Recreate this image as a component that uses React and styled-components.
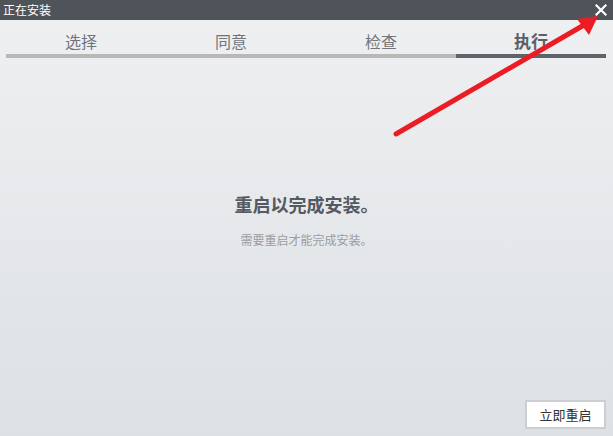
import styled, { createGlobalStyle } from 'styled-components';

const GlobalStyle = createGlobalStyle`
  html, body {
    margin: 0;
    padding: 0;
  }
  body {
    font-family: "Microsoft YaHei", "Noto Sans CJK SC", sans-serif;
  }
`;

const steps = ['选择', '同意', '检查', '执行'];
const activeStep = 3;

const App = () => {
  return (
    <Window>
      <GlobalStyle />
      <TitleBar>
        <Title>正在安装</Title>
        <CloseButton aria-label="close">
          <svg width="12" height="12" viewBox="0 0 12 12">
            <path d="M1.5 1.5 L10.5 10.5 M10.5 1.5 L1.5 10.5" stroke="#fff" strokeWidth="2.2" strokeLinecap="square" />
          </svg>
        </CloseButton>
      </TitleBar>
      <Steps>
        {steps.map((s, i) => (
          <Step key={s} active={i === activeStep}>
            <StepLabel active={i === activeStep}>{s}</StepLabel>
            <StepBar active={i === activeStep} />
          </Step>
        ))}
      </Steps>
      <Body>
        <Heading>重启以完成安装。</Heading>
        <Note>需要重启才能完成安装。</Note>
      </Body>
      <Footer>
        <Button>立即重启</Button>
      </Footer>
      <Pointer width="613" height="436" viewBox="0 0 613 436">
        <line x1="396" y1="134" x2="584" y2="25" stroke="#ec1c24" strokeWidth="5" strokeLinecap="round" />
        <polygon points="598,16 577,19 589,35" fill="#ec1c24" />
      </Pointer>
    </Window>
  );
};

const Window = styled.div`
  position: relative;
  width: 613px;
  height: 436px;
  display: flex;
  flex-direction: column;
  background: linear-gradient(#eff0f2, #dde1e4);
  overflow: hidden;
`;

const TitleBar = styled.div`
  height: 20px;
  background: #4f535a;
  display: flex;
  align-items: center;
  justify-content: space-between;
  padding: 0 6px 0 3px;
`;

const Title = styled.div`
  color: #fff;
  font-size: 12px;
  line-height: 20px;
`;

const CloseButton = styled.div`
  width: 12px;
  height: 12px;
  display: flex;
`;

const Steps = styled.div`
  display: grid;
  grid-template-columns: repeat(4, 150px);
  padding: 0 7px 0 6px;
`;

const Step = styled.div`
  display: flex;
  flex-direction: column;
  align-items: center;
`;

const StepLabel = styled.div`
  height: 34px;
  line-height: 42px;
  font-size: ${p => (p.active ? '17px' : '16px')};
  font-weight: ${p => (p.active ? 'bold' : 'normal')};
  color: ${p => (p.active ? '#5b6066' : '#70757b')};
`;

const StepBar = styled.div`
  align-self: stretch;
  height: 4px;
  background: ${p => (p.active ? '#5e6369' : '#b8b8b8')};
`;

const Body = styled.div`
  flex: 1;
  display: flex;
  flex-direction: column;
  align-items: center;
  padding-top: 133px;
`;

const Heading = styled.div`
  font-size: 18px;
  font-weight: bold;
  color: #555a60;
  line-height: 26px;
`;

const Note = styled.div`
  margin-top: 14px;
  font-size: 12px;
  color: #9a9da1;
`;

const Footer = styled.div`
  display: flex;
  justify-content: flex-end;
  padding: 0 7px 7px 0;
`;

const Button = styled.div`
  width: 77px;
  height: 25px;
  border: 2px solid #cbcfd3;
  background: #fff;
  color: #333;
  font-size: 13px;
  display: flex;
  align-items: center;
  justify-content: center;
`;

const Pointer = styled.svg`
  position: absolute;
  left: 0;
  top: 0;
  pointer-events: none;
`;

export default App;
